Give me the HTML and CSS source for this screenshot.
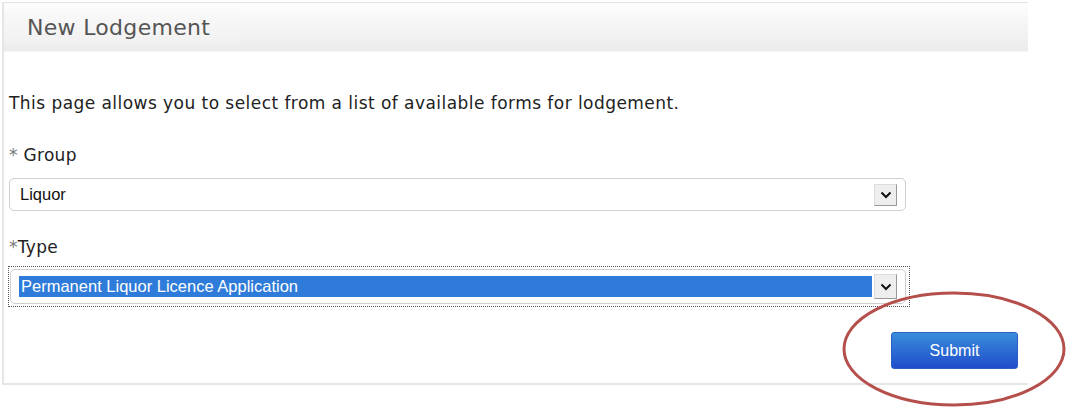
FILE: index.html
```html
<!DOCTYPE html>
<html>
<head>
<meta charset="utf-8">
<link rel="stylesheet" href="styles.css">
</head>
<body>
<div class="panel">
  <div class="panel-header"><div class="tab">New Lodgement</div></div>
  <div class="panel-body">
    <p class="intro">This page allows you to select from a list of available forms for lodgement.</p>
    <div class="field field-group">
      <div class="label"><span class="req">*</span> Group</div>
      <div class="select">
        <span class="value">Liquor</span>
        <span class="arrow"><svg width="12" height="8" viewBox="0 0 12 8"><path d="M1.5 1.5 L6 6 L10.5 1.5" fill="none" stroke="#111" stroke-width="2"/></svg></span>
      </div>
    </div>
    <div class="field field-type">
      <div class="label"><span class="req">*</span>Type</div>
      <div class="focus">
        <div class="select select-type">
          <span class="value selected">Permanent Liquor Licence Application</span>
          <span class="arrow"><svg width="12" height="8" viewBox="0 0 12 8"><path d="M1.5 1.5 L6 6 L10.5 1.5" fill="none" stroke="#111" stroke-width="2"/></svg></span>
        </div>
      </div>
    </div>
    <div class="actions"><button class="submit">Submit</button></div>
  </div>
</div>
<svg class="circle" width="226" height="118" viewBox="0 0 226 118"><ellipse cx="113" cy="59" rx="110" ry="56" fill="none" stroke="#b54f4c" stroke-width="3"/></svg>
</body>
</html>
```
FILE: styles.css
```css
html, body { margin: 0; padding: 0; background: #fff; }
body { font-family: "DejaVu Sans", Verdana, sans-serif; color: #222; position: relative; width: 1068px; height: 409px; overflow: hidden; }
.panel {
  margin: 2px 0 0 2px;
  width: 1026px;
  border-top: 1px solid #e2e2e2;
  border-left: 2px solid #e6e6e6;
  border-bottom: 2px solid #e6e6e6;
  box-sizing: border-box;
}
.panel-header {
  height: 48px;
  background: linear-gradient(#fdfdfd, #ececec);
  border-bottom: 1px solid #f4f4f4;
  display: flex;
  align-items: center;
}
.tab {
  height: 32px;
  width: 213px;
  padding-left: 23px;
  display: flex;
  align-items: center;
  font-size: 22px;
  letter-spacing: 0.3px;
  color: #555;
  background: linear-gradient(#f9f9f9, #f1f1f1);
  margin-top: 0;
}
.panel-body { padding: 40px 0 14px 5px; }
.intro { margin: 0 0 30px; font-size: 17px; letter-spacing: 0.45px; line-height: 22px; color: #222; }
.field-group { margin-bottom: 25px; }
.label { font-size: 17px; letter-spacing: 0.3px; line-height: 22px; color: #222; }
.field-group .label { margin-bottom: 12px; }
.field-type .label { margin-bottom: 8px; }
.req { color: #777; }
.select {
  width: 897px;
  height: 33px;
  box-sizing: border-box;
  border: 1px solid #cfcfcf;
  border-radius: 5px;
  display: flex;
  align-items: center;
  justify-content: space-between;
  padding: 0 8px 0 10px;
  font-family: "Liberation Sans", Arial, sans-serif;
  font-size: 16.5px;
  background: #fff;
}
.value { color: #111; }
.arrow {
  width: 23px;
  height: 22px;
  box-sizing: border-box;
  background: #eeeeee;
  border: 1px solid #999;
  border-top-color: #ddd;
  border-left-color: #ddd;
  display: flex;
  align-items: center;
  justify-content: center;
}
.focus {
  width: 902px;
  box-sizing: border-box;
  border: 1px dotted #555;
  padding: 2px 3px 2px 1px;
  margin-left: -1px;
}
.select-type { width: 896px; height: 35px; padding-left: 8px; }
.selected {
  background: #2e7bd9;
  color: #fff;
  flex: 1;
  height: 21px;
  line-height: 21px;
  padding-left: 2px;
  margin-right: 2px;
}
.select-type .arrow { height: 25px; }
.actions { display: flex; justify-content: flex-end; padding-right: 10px; margin-top: 25px; }
.submit {
  width: 127px;
  height: 37px;
  border: 1px solid #2a5fc4;
  border-radius: 3px;
  background: linear-gradient(#3a8ddb, #1f4ccc);
  color: #fff;
  font-family: "Liberation Sans", Arial, sans-serif;
  font-size: 16px;
}
.circle { position: absolute; left: 841px; top: 290px; }
```
